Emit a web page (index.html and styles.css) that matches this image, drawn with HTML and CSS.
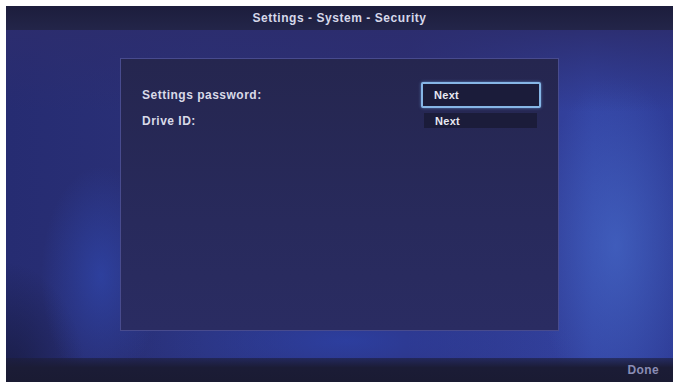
FILE: index.html
```html
<!DOCTYPE html>
<html>
<head>
<meta charset="utf-8">
<link rel="stylesheet" href="styles.css">
</head>
<body>
<div class="screen">
  <header class="topbar">Settings - System - Security</header>
  <main class="stage">
    <section class="panel">
      <div class="row">
        <span class="label">Settings password:</span>
        <span class="field field-focus">Next</span>
      </div>
      <div class="row">
        <span class="label">Drive ID:</span>
        <span class="field">Next</span>
      </div>
    </section>
  </main>
  <footer class="bottombar"><span class="done">Done</span></footer>
</div>
</body>
</html>
```
FILE: styles.css
```css
html, body {
  margin: 0;
  padding: 0;
  background: #ffffff;
}
body {
  width: 676px;
  height: 382px;
  overflow: hidden;
  font-family: "Liberation Sans", Arial, sans-serif;
}
.screen {
  margin: 6px 3px 0 6px;
  height: 376px;
  display: flex;
  flex-direction: column;
  background:
    radial-gradient(ellipse 80px 170px at 610px 240px, rgba(72,110,205,0.6), rgba(72,110,205,0) 100%),
    radial-gradient(ellipse 60px 110px at 95px 270px, rgba(50,78,190,0.55), rgba(50,78,190,0) 100%),
    radial-gradient(ellipse 230px 60px at 340px 335px, rgba(45,72,185,0.6), rgba(45,72,185,0) 100%),
    radial-gradient(ellipse 80px 120px at 0px 376px, rgba(20,22,50,0.7), rgba(20,22,50,0) 100%),
    linear-gradient(90deg, #262c72 0%, #2b3178 30%, #2d2f76 60%, #3343a2 88%, #2f3d98 100%);
}
.topbar {
  height: 24px;
  flex: none;
  display: flex;
  align-items: center;
  justify-content: center;
  color: #d6d8ea;
  font-size: 12px;
  letter-spacing: 0.55px;
  font-weight: bold;
  background: linear-gradient(180deg, #1c1d3c 0%, #232549 100%);
}
.stage {
  flex: 1;
  display: flex;
  justify-content: center;
  padding-top: 28px;
  background: linear-gradient(180deg, rgba(44,45,110,0.9) 0%, rgba(44,45,110,0) 25%);
}
.panel {
  box-sizing: border-box;
  width: 439px;
  height: 273px;
  border: 1px solid #484b8e;
  background: linear-gradient(180deg, #25264f 0%, #282a5c 60%, #2a2c62 100%);
  padding: 23px 17px 0 21px;
  display: flex;
  flex-direction: column;
  gap: 5px;
}
.row {
  display: flex;
  align-items: center;
  justify-content: space-between;
}
.label {
  color: #d9dae8;
  font-size: 12px;
  letter-spacing: 0.5px;
  font-weight: bold;
}
.field {
  width: 113px;
  height: 15px;
  margin-right: 4px;
  box-sizing: border-box;
  background: #1b1c3a;
  color: #e8e9f2;
  font-size: 11px;
  letter-spacing: 0.3px;
  font-weight: bold;
  padding-left: 11px;
  display: flex;
  align-items: center;
}
.field-focus {
  width: 120px;
  height: 26px;
  margin-right: 0;
  border: 2px solid #86b6e6;
  box-shadow: 0 0 3px rgba(120,170,230,0.7);
  border-radius: 2px;
  padding-left: 11px;
}
.bottombar {
  height: 24px;
  flex: none;
  display: flex;
  align-items: center;
  justify-content: flex-end;
  padding-right: 14px;
  background: linear-gradient(180deg, rgba(28,29,58,0.6) 0%, #1b1c36 40%, #1a1b33 100%);
}
.done {
  color: #8a8db5;
  font-size: 12px;
  letter-spacing: 0.4px;
  font-weight: bold;
}
```
